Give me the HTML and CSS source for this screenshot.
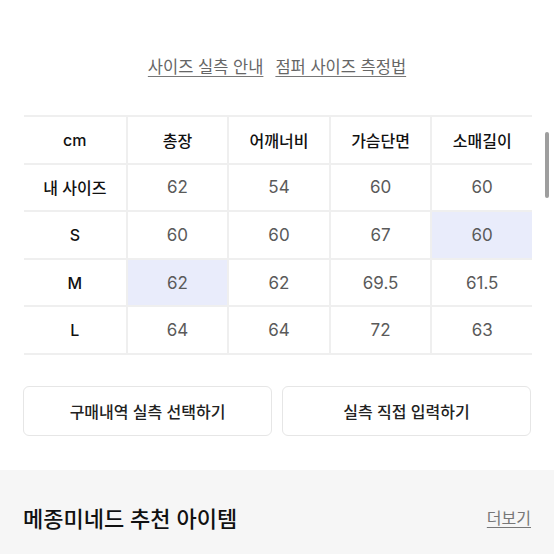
FILE: index.html
```html
<!DOCTYPE html>
<html lang="ko">
<head>
<meta charset="utf-8">
<link rel="stylesheet" href="styles.css">
</head>
<body>
<div class="page">
  <div class="links">
    <a class="link">사이즈 실측 안내</a>
    <a class="link">점퍼 사이즈 측정법</a>
  </div>
  <div class="table">
    <div class="row head">
      <div class="cell label">cm</div>
      <div class="cell">총장</div>
      <div class="cell">어깨너비</div>
      <div class="cell">가슴단면</div>
      <div class="cell">소매길이</div>
    </div>
    <div class="row">
      <div class="cell label">내 사이즈</div>
      <div class="cell num">62</div>
      <div class="cell num">54</div>
      <div class="cell num">60</div>
      <div class="cell num">60</div>
    </div>
    <div class="row">
      <div class="cell label">S</div>
      <div class="cell num">60</div>
      <div class="cell num">60</div>
      <div class="cell num">67</div>
      <div class="cell num hl">60</div>
    </div>
    <div class="row">
      <div class="cell label">M</div>
      <div class="cell num hl">62</div>
      <div class="cell num">62</div>
      <div class="cell num">69.5</div>
      <div class="cell num">61.5</div>
    </div>
    <div class="row">
      <div class="cell label">L</div>
      <div class="cell num">64</div>
      <div class="cell num">64</div>
      <div class="cell num">72</div>
      <div class="cell num">63</div>
    </div>
  </div>
  <div class="buttons">
    <button class="btn">구매내역 실측 선택하기</button>
    <button class="btn">실측 직접 입력하기</button>
  </div>
  <div class="reco">
    <div class="reco-head">
      <div class="reco-title">메종미네드 추천 아이템</div>
      <a class="more">더보기</a>
    </div>
  </div>
  <div class="scrollbar"></div>
</div>
</body>
</html>
```
FILE: styles.css
```css
* { box-sizing: border-box; }
html, body { margin: 0; padding: 0; background: #fff; }
body {
  font-family: Inter, "Noto Sans CJK KR", sans-serif;
  color: #111;
  height: 554px;
  overflow: hidden;
}
.page { position: relative; height: 554px; }
.links {
  display: flex;
  justify-content: center;
  gap: 12px;
  padding-top: 54px;
  height: 115px;
}
.link {
  font-size: 16.5px;
  line-height: 26px;
  color: #666;
  text-decoration: underline;
  text-underline-offset: 3px;
  text-decoration-color: #777;
}
.table {
  margin-left: 24px;
  width: 508px;
  border-top: 2px solid #efefef;
}
.row {
  display: grid;
  grid-template-columns: repeat(5, 1fr);
  height: 47.6px;
  border-bottom: 2px solid #efefef;
}
.cell {
  display: flex;
  align-items: center;
  justify-content: center;
  font-size: 16px;
  font-weight: 500;
  color: #111;
  border-left: 2px solid #efefef;
}
.cell.label { border-left: none; }
.cell.num {
  font-weight: 400;
  font-size: 17px;
  color: #5a5a5a;
}
.cell.hl { background: #e9ecfb; }
.buttons {
  display: flex;
  gap: 10px;
  margin: 31px 0 0 23px;
  width: 508px;
}
.btn {
  flex: 1;
  height: 50px;
  background: #fff;
  border: 1px solid #e6e6e6;
  border-radius: 6px;
  font-family: Inter, "Noto Sans CJK KR", sans-serif;
  font-size: 16px;
  font-weight: 500;
  color: #222;
}
.reco {
  margin-top: 34px;
  background: #f6f6f6;
  height: 200px;
  padding: 31px 23px 0 23px;
}
.reco-head {
  display: flex;
  justify-content: space-between;
  align-items: center;
}
.reco-title {
  font-size: 22px;
  font-weight: 500;
  color: #111;
}
.more {
  font-size: 16px;
  color: #777;
  text-decoration: underline;
  text-underline-offset: 3px;
}
.scrollbar {
  position: absolute;
  left: 545px;
  top: 132px;
  width: 4px;
  height: 66px;
  border-radius: 2px;
  background: #9e9e9e;
}
```
